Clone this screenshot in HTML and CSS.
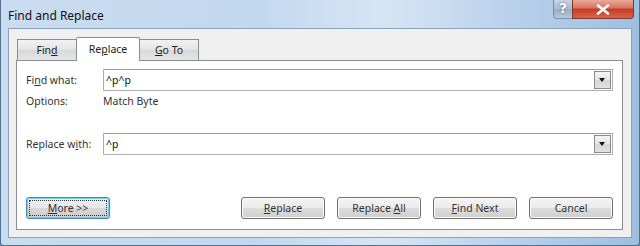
FILE: index.html
```html
<!DOCTYPE html>
<html lang="en">
<head>
    <meta charset="UTF-8">
    <title>Find and Replace</title>
    <link rel="stylesheet" href="styles.css">
</head>
<body>
    <div class="window">
        <div class="titlebar">
            <span class="title">Find and Replace</span>
            <div class="caption">
                <span class="cap-help">?</span>
                <span class="cap-close">
                    <svg width="14" height="11" viewBox="0 0 14 11">
                        <path d="M2 1.5 L12 9.5 M12 1.5 L2 9.5" stroke="#fff" stroke-width="2.6" stroke-linecap="round"/>
                    </svg>
                </span>
            </div>
        </div>

        <div class="client">
            <div class="tabs">
                <div class="tab">Fin<u>d</u></div>
                <div class="tab active">Re<u>p</u>lace</div>
                <div class="tab"><u>G</u>o To</div>
            </div>

            <div class="panel">
                <div class="row">
                    <label class="label">Fi<u>n</u>d what:</label>
                    <div class="combo">
                        <span class="combo-text">^p^p</span>
                        <span class="drop"></span>
                    </div>
                </div>
                <div class="row options">
                    <span class="label">Options:</span>
                    <span>Match Byte</span>
                </div>
                <div class="row replace-row">
                    <label class="label">Replace w<u>i</u>th:</label>
                    <div class="combo">
                        <span class="combo-text">^p</span>
                        <span class="drop"></span>
                    </div>
                </div>

                <div class="buttons">
                    <button class="btn focused"><span class="focus-ring"><u>M</u>ore &gt;&gt;</span></button>
                    <div class="btn-group">
                        <button class="btn"><u>R</u>eplace</button>
                        <button class="btn">Replace <u>A</u>ll</button>
                        <button class="btn"><u>F</u>ind Next</button>
                        <button class="btn">Cancel</button>
                    </div>
                </div>
            </div>
        </div>
    </div>
</body>
</html>
```

FILE: styles.css
```css
body {
    margin: 0;
    font-family: "Noto Sans", "Open Sans", sans-serif;
    font-size: 10.5px;
    color: #333;
    background: #6f8fae;
}
u {
    text-decoration: underline;
    text-underline-offset: 1px;
}
.window {
    width: 640px;
    height: 246px;
    box-sizing: border-box;
    padding: 0 7px 7px 7px;
    display: flex;
    flex-direction: column;
    background: linear-gradient(90deg, #cadcf0 0%, #c2d8ef 40%, #d6e5f5 60%, #b2cce8 85%, #9fbfe0 100%);
    border-left: 1px solid #52708f;
    border-right: 1px solid #52708f;
    border-bottom: 1px solid #52708f;
    border-radius: 0 0 4px 4px;
}
.titlebar {
    height: 28px;
    display: flex;
    align-items: flex-start;
    flex-shrink: 0;
}
.title {
    font-size: 12px;
    color: #111;
    margin-top: 7px;
}
.caption {
    margin-left: auto;
    display: flex;
    margin-right: -2px;
}
.cap-help {
    width: 19px;
    height: 19px;
    box-sizing: border-box;
    border: 1px solid #7d8fa5;
    border-top: none;
    border-right: none;
    border-radius: 0 0 0 4px;
    background: linear-gradient(#c5d4e3, #a9bbcf 50%, #98adc4 51%, #b8cadc);
    color: #fff;
    font-family: "DejaVu Sans", sans-serif;
    font-weight: bold;
    font-size: 14px;
    line-height: 17px;
    text-align: center;
    text-shadow: 0 0 2px #34506e;
}
.cap-close {
    width: 62px;
    height: 19px;
    box-sizing: border-box;
    border: 1px solid #7e3a31;
    border-top: none;
    border-radius: 0 0 4px 0;
    background: linear-gradient(#e9a99b, #d7735f 45%, #c63b23 50%, #d8644a);
    display: flex;
    align-items: center;
    justify-content: center;
}
.client {
    flex: 1;
    background: #f0f0f0;
    border: 1px solid #8aa3bd;
    padding: 8px 8px 7px 7px;
    display: flex;
    flex-direction: column;
}
.tabs {
    display: flex;
    align-items: flex-end;
    height: 23px;
    margin-left: 1px;
    position: relative;
    z-index: 1;
}
.tab {
    height: 21px;
    box-sizing: border-box;
    padding: 0 6px;
    border: 1px solid #898c95;
    border-bottom: none;
    background: linear-gradient(#f2f2f2, #e3e3e3 50%, #d9d9d9 51%, #e5e5e5);
    text-align: center;
    line-height: 21px;
    color: #222;
}
.tab:first-child {
    width: 59px;
    border-right: none;
}
.tab:last-child {
    width: 59px;
    border-left: none;
}
.tab.active {
    width: 64px;
    height: 24px;
    margin-bottom: -1px;
    background: #fff;
    line-height: 23px;
    border-radius: 2px 2px 0 0;
}
.panel {
    flex: 1;
    background: #fff;
    border: 1px solid #898c95;
    padding: 8px 9px 10px 9px;
    display: flex;
    flex-direction: column;
}
.row {
    display: flex;
    align-items: center;
}
.label {
    width: 77px;
    flex-shrink: 0;
}
.combo {
    flex: 1;
    height: 22px;
    box-sizing: border-box;
    border: 1px solid #abadb3;
    border-top-color: #9a9ca3;
    display: flex;
    align-items: center;
    padding-left: 2px;
    padding-right: 1px;
}
.combo-text {
    flex: 1;
    color: #111;
}
.drop {
    width: 17px;
    height: 18px;
    box-sizing: border-box;
    border: 1px solid #8b8b8b;
    background: linear-gradient(#f4f4f4, #e4e4e4 50%, #d6d6d6 51%, #e2e2e2);
    position: relative;
}
.drop::after {
    content: "";
    position: absolute;
    left: 4px;
    top: 6px;
    border-left: 3.5px solid transparent;
    border-right: 3.5px solid transparent;
    border-top: 4px solid #111;
}
.options {
    margin-top: 3px;
    height: 14px;
}
.replace-row {
    margin-top: 25px;
}
.buttons {
    margin-top: auto;
    display: flex;
    justify-content: space-between;
}
.btn-group {
    display: flex;
    gap: 12px;
}
.btn {
    width: 84px;
    height: 22px;
    box-sizing: border-box;
    font-family: inherit;
    font-size: 10.5px;
    color: #333;
    border: 1px solid #707070;
    border-radius: 3px;
    background: linear-gradient(#f4f4f4, #ebebeb 50%, #dddddd 51%, #cfcfcf);
    padding: 0;
    box-shadow: inset 0 0 0 1px #fbfbfb;
}
.btn.focused {
    border-color: #3f8cb8;
    box-shadow: inset 0 0 0 1px #6fd0ee;
    background: linear-gradient(#f0f0f0, #e6e6e6 50%, #d8d8d8 51%, #cccccc);
    padding: 2px;
}
.focus-ring {
    display: block;
    height: 100%;
    box-sizing: border-box;
    border: 1px dotted #333;
    line-height: 14px;
}
```
